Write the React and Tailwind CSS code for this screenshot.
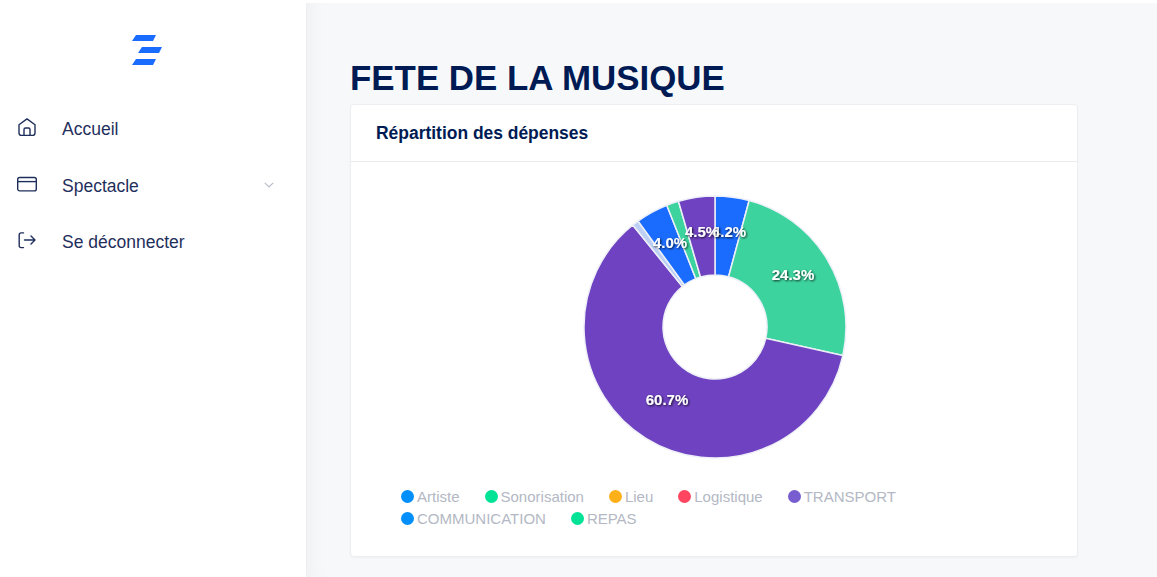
import React from 'react';

const slices = [
  { value: 4.2, color: '#1a6cff', label: '4.2%', x: 729, y: 231 },
  { value: 24.3, color: '#3dd39f', label: '24.3%', x: 793, y: 274 },
  { value: 60.7, color: '#6f42c1', label: '60.7%', x: 667, y: 399 },
  { value: 0.8, color: '#bcd0f5' },
  { value: 4.0, color: '#1a6cff', label: '4.0%', x: 670, y: 242 },
  { value: 1.5, color: '#3dd39f' },
  { value: 4.5, color: '#6f42c1', label: '4.5%', x: 702, y: 231 },
];

const legend = [
  { name: 'Artiste', color: 'bg-[#008ffb]' },
  { name: 'Sonorisation', color: 'bg-[#00e396]' },
  { name: 'Lieu', color: 'bg-[#feb019]' },
  { name: 'Logistique', color: 'bg-[#ff4560]' },
  { name: 'TRANSPORT', color: 'bg-[#775dd0]' },
  { name: 'COMMUNICATION', color: 'bg-[#008ffb]' },
  { name: 'REPAS', color: 'bg-[#00e396]' },
];

function slicePath(start, end) {
  const cx = 131, cy = 131, R = 131, r = 52;
  const a = (start * Math.PI) / 50;
  const b = (end * Math.PI) / 50;
  const large = end - start > 50 ? 1 : 0;
  const p = (rad, ang) => `${cx + rad * Math.sin(ang)} ${cy - rad * Math.cos(ang)}`;
  return `M${p(R, a)} A${R} ${R} 0 ${large} 1 ${p(R, b)} L${p(r, b)} A${r} ${r} 0 ${large} 0 ${p(r, a)} Z`;
}

function Donut() {
  let acc = 0;
  const parts = slices.map((s) => {
    const d = slicePath(acc, acc + s.value);
    acc += s.value;
    return { ...s, d };
  });
  return (
    <svg width="262" height="262" viewBox="0 0 262 262" className="block mx-auto overflow-visible">
      <defs>
        <filter id="labelShadow" x="-30%" y="-30%" width="160%" height="160%">
          <feDropShadow dx="1" dy="1" stdDeviation="1" floodColor="#000" floodOpacity="0.8" />
        </filter>
      </defs>
      {parts.map((s, i) => (
        <path key={i} d={s.d} fill={s.color} stroke="#eef0f8" strokeWidth="1.5" />
      ))}
      {parts.filter((s) => s.label).map((s) => (
        <text
          key={s.label}
          x={s.x - 584}
          y={s.y - 196}
          textAnchor="middle"
          dominantBaseline="central"
          fill="#fff"
          fontSize="15"
          fontWeight="700"
          fontFamily="'Liberation Sans', Arial, sans-serif"
          filter="url(#labelShadow)"
        >
          {s.label}
        </text>
      ))}
    </svg>
  );
}

function NavItem({ icon, label, chevron }) {
  return (
    <div className="flex items-center h-[57px] last:h-[55px] pl-[17px] pr-[32px] text-[#1f2f5c] text-[17.5px]">
      <span className="w-[45px] shrink-0 -mt-[4px]">{icon}</span>
      <span className="flex-1 pt-[2px]">{label}</span>
      {chevron}
    </div>
  );
}

export default function App() {
  return (
    <div className="flex h-[577px] overflow-hidden bg-white font-['Liberation_Sans',Arial,sans-serif]">
      <aside className="w-[306px] shrink-0 bg-white">
        <div className="pt-[35px] pl-[132px] h-[100px]">
          <svg width="30" height="30" viewBox="0 0 30 30" fill="#1a6cff" className="block">
            <polygon points="4,0 24,0 21,6 0,6" />
            <polygon points="10,12 30,12 27,18 6,18" />
            <polygon points="4,24 24,24 21,30 0,30" />
          </svg>
        </div>
        <nav>
          <NavItem
            label="Accueil"
            icon={
              <svg width="20" height="20" viewBox="0 0 20 20" fill="none" stroke="#1f2f5c" strokeWidth="1.4" strokeLinejoin="round" strokeLinecap="round" className="block">
                <path d="M2 7.8 L10 1.9 L18 7.8 V16 a2.4 2.4 0 0 1 -2.4 2.4 H4.4 A2.4 2.4 0 0 1 2 16 Z" />
                <path d="M7 18.4 V12.5 a1.5 1.5 0 0 1 1.5 -1.5 h3 a1.5 1.5 0 0 1 1.5 1.5 V18.4" />
              </svg>
            }
          />
          <NavItem
            label="Spectacle"
            icon={
              <svg width="20" height="20" viewBox="0 0 20 20" fill="none" stroke="#1f2f5c" strokeWidth="1.4" className="block">
                <rect x="0.7" y="3.5" width="18.6" height="13.4" rx="2" />
                <path d="M0.7 7.6 H19.3" />
              </svg>
            }
            chevron={
              <svg width="10" height="6" viewBox="0 0 10 6" fill="none" stroke="#b9bdc9" strokeWidth="1.2" className="block mb-[2px]">
                <path d="M0.8 0.8 L5 5 L9.2 0.8" />
              </svg>
            }
          />
          <NavItem
            label="Se déconnecter"
            icon={
              <svg width="20" height="20" viewBox="0 -1 20 20" fill="none" stroke="#1f2f5c" strokeWidth="1.4" strokeLinecap="round" strokeLinejoin="round" className="block">
                <path d="M6.5 1.9 H4 A1.8 1.8 0 0 0 2.2 3.7 V14.8 A1.8 1.8 0 0 0 4 16.6 H6.5" />
                <path d="M7.5 9 H18 M14 5 L18 9 L14 13" />
              </svg>
            }
          />
        </nav>
      </aside>

      <main className="flex-1 mt-[3px] bg-[#f7f8fa] border-l border-[#eceef1] shadow-[inset_14px_0_22px_-16px_rgba(0,0,0,0.06)] pl-[43px] pr-[79px] pt-[54px]">
        <h1 className="text-[34.9px] leading-[42px] font-bold text-[#001b54] mb-[5px]">FETE DE LA MUSIQUE</h1>
        <section className="bg-white rounded border border-[#eceef1] shadow-[0_1px_2px_rgba(0,0,0,0.04)] h-[453px]">
          <div className="h-[57px] flex items-center px-[25px] border-b border-[#e9ebef]">
            <h2 className="text-[17.45px] font-bold text-[#001b54]">Répartition des dépenses</h2>
          </div>
          <div className="pt-[34px]">
            <div className="pl-[2px]">
              <Donut />
            </div>
            <ul className="flex flex-wrap mt-[28px] px-[50px] text-[15px] leading-[22px] text-[#b3b8c4]">
              {legend.map((item) => (
                <li key={item.name} className="flex items-center mr-[25px]">
                  <span className={`w-[13px] h-[13px] rounded-full mr-[3px] -mt-[1px] ${item.color}`} />
                  {item.name}
                </li>
              ))}
            </ul>
          </div>
        </section>
      </main>
    </div>
  );
}
